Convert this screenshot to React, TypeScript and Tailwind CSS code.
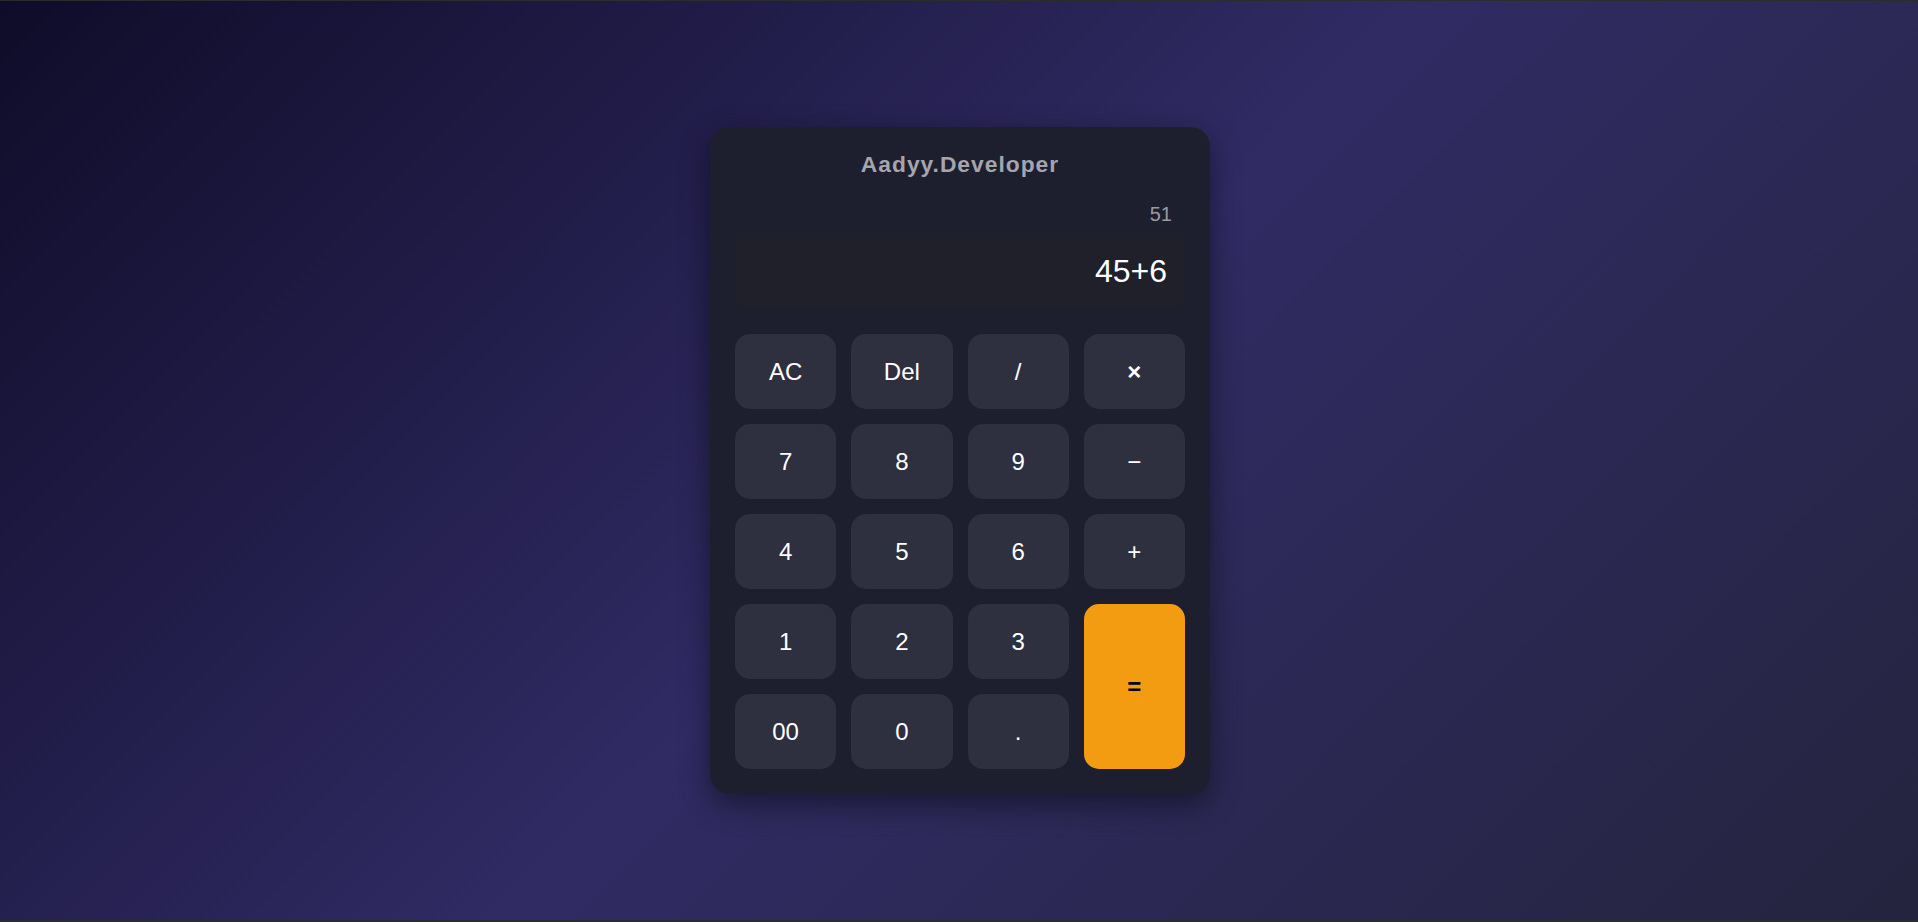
import React from "react";

type Btn = { label: string; kind?: "op" | "eq" | "mul" };

const rows: Btn[] = [
  { label: "AC" },
  { label: "Del" },
  { label: "/" },
  { label: "×", kind: "mul" },
  { label: "7" },
  { label: "8" },
  { label: "9" },
  { label: "−", kind: "op" },
  { label: "4" },
  { label: "5" },
  { label: "6" },
  { label: "+", kind: "op" },
  { label: "1" },
  { label: "2" },
  { label: "3" },
  { label: "=", kind: "eq" },
  { label: "00" },
  { label: "0" },
  { label: "." },
];

export default function App() {
  return (
    <div
      className="min-h-screen w-full flex items-center justify-center pl-[2px] border-t border-t-[#2c2c2c] border-b-2 border-b-[#2c2c2c] bg-[linear-gradient(135deg,#0f0c29_0%,#302b63_50%,#24243e_100%)]"
      style={{ fontFamily: '"Liberation Sans", Arial, sans-serif' }}
    >
      <div className="w-[500px] rounded-[20px] bg-[#1d1e2e] p-[25px] shadow-[0_10px_30px_rgba(0,0,0,0.45)]">
        <div className="text-center text-[22.8px] leading-[24px] font-bold tracking-[1px] text-[#a5a5ae]">
          Aadyy.Developer
        </div>
        <div className="mt-[26px] pr-[13px] text-right text-[20px] leading-[24px] text-[#9a9aa3]">
          51
        </div>
        <div className="mt-[7px] h-[75px] rounded-[12px] bg-[#20202b] px-[18px] flex items-center justify-end">
          <span className="text-[32px] leading-[40px] text-white">45+6</span>
        </div>
        <div className="mt-[26px] grid grid-cols-4 gap-[15px] auto-rows-[75px]">
          {rows.map((b) =>
            b.kind === "eq" ? (
              <button
                key={b.label}
                className="row-span-2 rounded-[15px] bg-[#f39c12] text-[24px] font-bold text-black flex items-center justify-center"
              >
                {b.label}
              </button>
            ) : (
              <button
                key={b.label}
                className={
                  b.kind === "mul"
                    ? "rounded-[15px] bg-[#2e2f3f] text-[24px] font-bold text-white flex items-center justify-center"
                    : "rounded-[15px] bg-[#2e2f3f] text-[24px] text-white flex items-center justify-center"
                }
              >
                {b.label}
              </button>
            )
          )}
        </div>
      </div>
    </div>
  );
}
